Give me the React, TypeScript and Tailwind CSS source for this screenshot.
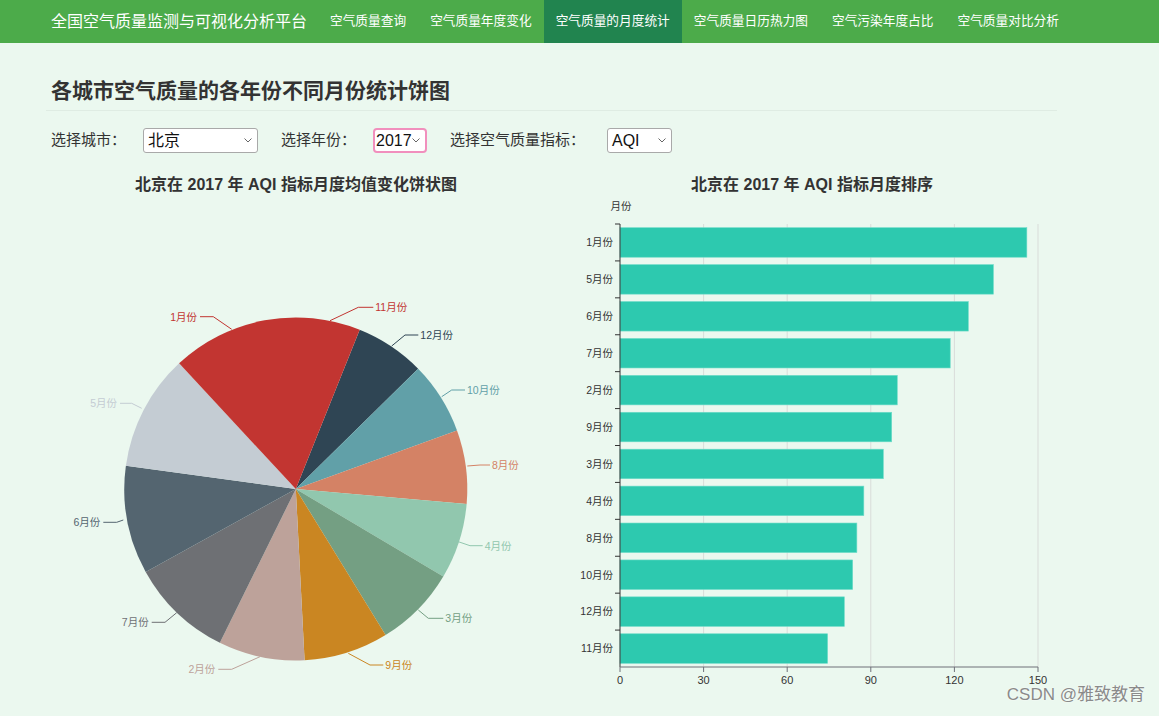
import * as React from 'react';

const navItems = [
  '空气质量查询',
  '空气质量年度变化',
  '空气质量的月度统计',
  '空气质量日历热力图',
  '空气污染年度占比',
  '空气质量对比分析',
];

// monthly AQI means, sorted ascending (pie order, clockwise from top)
const pieData = [
  { name: '11月份', value: 74.5, color: '#c23531' },
  { name: '12月份', value: 80.5, color: '#2f4554' },
  { name: '10月份', value: 83.5, color: '#61a0a8' },
  { name: '8月份', value: 85, color: '#d48265' },
  { name: '4月份', value: 87.5, color: '#91c7ae' },
  { name: '3月份', value: 94.5, color: '#749f83' },
  { name: '9月份', value: 97.5, color: '#ca8622' },
  { name: '2月份', value: 99.5, color: '#bda29a' },
  { name: '7月份', value: 118.5, color: '#6e7074' },
  { name: '6月份', value: 125, color: '#546570' },
  { name: '5月份', value: 134, color: '#c4ccd3' },
  { name: '1月份', value: 146, color: '#c23531' },
];

// label guide lines measured off the layout echarts produced
const pieLabels: Record<string, { pts: number[][]; anchor: 'start' | 'end' }> = {
  '11月份': { pts: [[330, 320.7], [358.3, 307.3], [373.3, 307.3]], anchor: 'start' },
  '12月份': { pts: [[391.7, 346], [405, 335], [418.3, 335]], anchor: 'start' },
  '10月份': { pts: [[441.7, 396.7], [451.7, 390], [465, 390]], anchor: 'start' },
  '8月份': { pts: [[467.3, 466], [480, 465], [490, 465]], anchor: 'start' },
  '4月份': { pts: [[458.3, 541.7], [470, 545.7], [482.7, 545.7]], anchor: 'start' },
  '3月份': { pts: [[418.3, 610], [428.3, 618.3], [443.3, 618.3]], anchor: 'start' },
  '9月份': { pts: [[348.3, 653.3], [370, 665], [383.3, 665]], anchor: 'start' },
  '2月份': { pts: [[260, 656.7], [231.7, 669.3], [218.3, 669.3]], anchor: 'end' },
  '7月份': { pts: [[176.7, 612.7], [165, 622.3], [151.7, 622.3]], anchor: 'end' },
  '6月份': { pts: [[123.3, 520], [116.7, 522.3], [103.3, 522.3]], anchor: 'end' },
  '5月份': { pts: [[141.7, 408.3], [131.7, 403.3], [120, 403.3]], anchor: 'end' },
  '1月份': { pts: [[231.7, 329.3], [213.3, 316.7], [200, 316.7]], anchor: 'end' },
};

const barData = [...pieData].sort((a, b) => b.value - a.value);

function FakeSelect({ value, width, focused }: { value: string; width: string; focused?: boolean }) {
  return (
    <div
      className={`${width} h-[25px] bg-white flex items-center justify-between pr-[5px] text-[16px] text-[#111] ${
        focused ? 'border-2 border-[#f18fbd] rounded-[4px] pl-[1px]' : 'border border-[#a9a9a9] rounded-[3px] pl-[4px]'
      }`}
    >
      <span className="leading-none">{value}</span>
      <svg width="8" height="5" viewBox="0 0 8 5" className="shrink-0">
        <path d="M0.5 0.5 L4 4 L7.5 0.5" fill="none" stroke="#666" strokeWidth="1" />
      </svg>
    </div>
  );
}

function PieChart() {
  const cx = 295.8;
  const cy = 489;
  const r = 171.5;
  const total = pieData.reduce((s, d) => s + d.value, 0);

  // angular spans (radians, clockwise from 12 o'clock)
  let acc = 0;
  const spans = pieData.map((d) => {
    const a0 = (acc / total) * Math.PI * 2;
    acc += d.value;
    return { ...d, a0, a1: (acc / total) * Math.PI * 2 };
  });
  // first and last slice share the palette red: draw them as one wedge so no seam shows
  const first = spans[0];
  const last = spans[spans.length - 1];
  const wedges = [...spans.slice(1, -1), { ...last, a1: last.a1 + (first.a1 - first.a0) }];

  const arc = (a0: number, a1: number) => {
    const x0 = cx + r * Math.sin(a0);
    const y0 = cy - r * Math.cos(a0);
    const x1 = cx + r * Math.sin(a1);
    const y1 = cy - r * Math.cos(a1);
    const large = a1 - a0 > Math.PI ? 1 : 0;
    return `M${cx} ${cy} L${x0} ${y0} A${r} ${r} 0 ${large} 1 ${x1} ${y1} Z`;
  };

  return (
    <svg width="500" height="546" viewBox="46 170 500 546" className="block shrink-0">
      <text x="296" y="190" textAnchor="middle" fontSize="16" fontWeight="bold" fill="#333">
        北京在 2017 年 AQI 指标月度均值变化饼状图
      </text>
      {wedges.map((s) => (
        <path key={s.name} d={arc(s.a0, s.a1)} fill={s.color} />
      ))}
      {pieData.map((d) => {
        const l = pieLabels[d.name];
        const end = l.pts[2];
        return (
          <g key={d.name}>
            <polyline points={l.pts.map((p) => p.join(',')).join(' ')} fill="none" stroke={d.color} strokeWidth="1" />
            <text
              x={l.anchor === 'start' ? end[0] + 2 : end[0] - 3}
              y={end[1] + 3.8}
              textAnchor={l.anchor}
              fontSize="10.5"
              fill={d.color}
            >
              {d.name}
            </text>
          </g>
        );
      })}
    </svg>
  );
}

function BarChart() {
  const x0 = 620;
  const x1 = 1038;
  const top = 224;
  const bottom = 667;
  const band = (bottom - top) / barData.length;
  const scale = (x1 - x0) / 150;
  const ticks = [0, 30, 60, 90, 120, 150];

  return (
    <svg width="500" height="546" viewBox="562 170 500 546" className="block shrink-0">
      <text x="812" y="190" textAnchor="middle" fontSize="16" fontWeight="bold" fill="#333">
        北京在 2017 年 AQI 指标月度排序
      </text>
      <text x="621" y="210" textAnchor="middle" fontSize="10.5" fill="#333">
        月份
      </text>

      {/* grid */}
      {ticks.slice(1).map((t) => (
        <line key={t} x1={x0 + t * scale} y1={top} x2={x0 + t * scale} y2={bottom} stroke="#d9dcd9" strokeWidth="1" />
      ))}

      {/* bars */}
      {barData.map((d, i) => (
        <rect
          key={d.name}
          x={x0}
          y={top + i * band + band * 0.1}
          width={d.value * scale}
          height={band * 0.8}
          fill="#2dc9af"
          stroke="#6fdcc9"
          strokeWidth="0.6"
        />
      ))}

      {/* y axis */}
      <line x1={x0} y1={top} x2={x0} y2={bottom} stroke="#333" strokeWidth="1" />
      {barData.map((d, i) => (
        <line key={`t${i}`} x1={x0 - 5} y1={top + i * band} x2={x0} y2={top + i * band} stroke="#333" strokeWidth="1" />
      ))}
      {barData.map((d, i) => (
        <text key={`l${i}`} x={x0 - 7} y={top + i * band + band / 2 + 3.8} textAnchor="end" fontSize="10.5" fill="#333">
          {d.name}
        </text>
      ))}

      {/* x axis */}
      <line x1={x0} y1={bottom} x2={x1} y2={bottom} stroke="#6e7079" strokeWidth="1" />
      {ticks.map((t) => (
        <g key={t}>
          <line x1={x0 + t * scale} y1={bottom} x2={x0 + t * scale} y2={bottom + 5} stroke="#6e7079" strokeWidth="1" />
          <text x={x0 + t * scale} y={bottom + 17} textAnchor="middle" fontSize="11" fill="#333">
            {t}
          </text>
        </g>
      ))}
    </svg>
  );
}

export default function App() {
  return (
    <div className="relative h-[716px] overflow-hidden bg-[#ebf8ef] font-['Liberation_Sans','Noto_Sans_CJK_SC',sans-serif] text-[#333]">
      {/* Top Navigation */}
      <nav className="h-[43px] bg-[#4cab4a] flex items-stretch text-white">
        <div className="pl-[51px] w-[318px] shrink-0 flex items-center text-[16px] whitespace-nowrap">
          全国空气质量监测与可视化分析平台
        </div>
        {navItems.map((item, i) => (
          <div
            key={item}
            className={`px-[12px] flex items-center text-[12.7px] whitespace-nowrap ${i === 2 ? 'bg-[#21844f]' : ''}`}
          >
            {item}
          </div>
        ))}
      </nav>

      {/* Content */}
      <div className="ml-[46px] w-[1016px]">
        <div className="w-[1011px] pt-[33px] pb-[4px] pl-[5px] border-b border-[#dfece3]">
          <h1 className="text-[21px] leading-[30px] font-bold text-[#333]">各城市空气质量的各年份不同月份统计饼图</h1>
        </div>

        {/* Filters */}
        <div className="mt-[17px] h-[25px] pl-[5px] flex items-center text-[15px]">
          <span className="w-[92px]">选择城市：</span>
          <FakeSelect value="北京" width="w-[115px]" />
          <span className="ml-[23px] w-[92px]">选择年份：</span>
          <FakeSelect value="2017" width="w-[54px]" focused />
          <span className="ml-[23px] w-[157px]">选择空气质量指标：</span>
          <FakeSelect value="AQI" width="w-[65px]" />
        </div>

        {/* Charts */}
        <div className="mt-[17px] flex gap-[16px]">
          <PieChart />
          <BarChart />
        </div>
      </div>

      <div className="absolute right-[14px] bottom-[9px] text-[17px] text-[#8a8a8a] [text-shadow:0_0_2px_#ffffff]">
        CSDN @雅致教育
      </div>
    </div>
  );
}
